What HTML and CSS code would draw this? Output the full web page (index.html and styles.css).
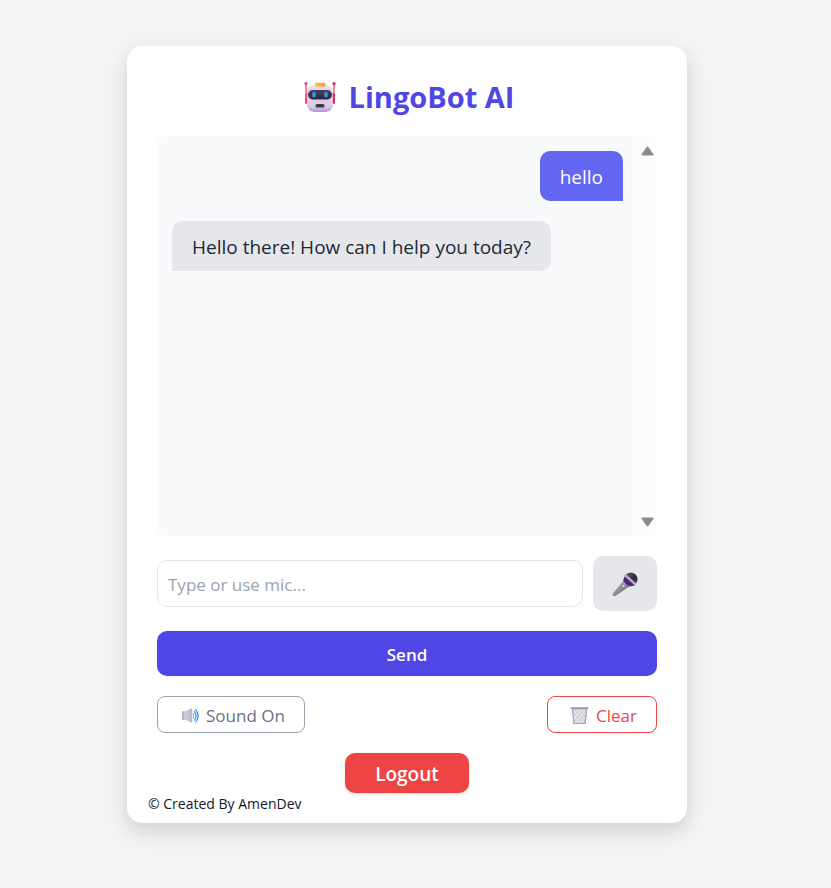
FILE: index.html
```
<!DOCTYPE html>
<html lang="en">
<head>
<meta charset="utf-8">
<meta name="viewport" content="width=device-width, initial-scale=1">
<title>LingoBot AI</title>
<link rel="stylesheet" href="styles.css">
</head>
<body>
<main class="card">
  <h1 class="title">
    <svg class="robot" viewBox="0 0 32 32" aria-hidden="true">
      <defs>
        <linearGradient id="face" x1="0" y1="0" x2="0" y2="1"><stop offset="0" stop-color="#e6dce6"/><stop offset=".8" stop-color="#d9cae1"/><stop offset="1" stop-color="#b592d6"/></linearGradient>
        <linearGradient id="visor" x1="0" y1="0" x2="0" y2="1"><stop offset="0" stop-color="#50405f"/><stop offset="1" stop-color="#2b2640"/></linearGradient>
        <linearGradient id="cap" x1="0" y1="0" x2="1" y2="0"><stop offset="0" stop-color="#ffc233"/><stop offset="1" stop-color="#e99a45"/></linearGradient>
      </defs>
      <path d="M2 2.500v16M30 2.500v16" stroke="#f0416f" stroke-width="1.300"/>
      <circle cx="2" cy="2.500" r="1.600" fill="#ef3e6b"/><circle cx="30" cy="2.500" r="1.600" fill="#d82858"/>
      <rect x="1" y="12" width="4" height="11" rx="1.500" fill="#ff4779"/><rect x="27" y="12" width="4" height="11" rx="1.500" fill="#dd2860"/>
      <path d="M9 4.500h14q5.500.5 5.800 6l.2 13q-.5 7-7 7.500H10q-6.500-.5-7-7.500l.2-13Q3.500 5 9 4.500Z" fill="url(#face)"/>
      <rect x="11" y="1.800" width="10.500" height="3.600" rx="1.400" fill="url(#cap)"/>
      <rect x="4" y="9" width="24" height="9.500" rx="4.700" fill="url(#visor)"/>
      <rect x="8.300" y="11" width="3.400" height="5.500" rx="1.600" fill="#269df0"/><rect x="20.300" y="11" width="3.400" height="5.500" rx="1.600" fill="#269df0"/>
      <rect x="11.500" y="23" width="9" height="3.600" rx="1.600" fill="#40364e"/>
    </svg>
    <span>LingoBot AI</span>
  </h1>

  <section class="chat" aria-label="Conversation">
    <div class="messages">
      <p class="bubble user">hello</p>
      <p class="bubble bot">Hello there! How can I help you today?</p>
    </div>
    <div class="track" aria-hidden="true">
      <svg class="arrow" viewBox="0 0 13 10"><path d="M6.500 1.500 11.500 8.500H1.500Z" fill="#8b8b8b" stroke="#8b8b8b" stroke-width="2" stroke-linejoin="round"/></svg>
      <svg class="arrow" viewBox="0 0 13 10"><path d="M1.500 1.500h10L6.500 8.500Z" fill="#8b8b8b" stroke="#8b8b8b" stroke-width="2" stroke-linejoin="round"/></svg>
    </div>
  </section>

  <form class="composer">
    <div class="entry">
      <input class="field" type="text" placeholder="Type or use mic..." aria-label="Message">
      <button class="mic" type="button" aria-label="Use microphone">
        <svg viewBox="0 0 26 26" aria-hidden="true">
          <defs>
            <linearGradient id="grip" x1="0" y1="0" x2="1" y2="1"><stop offset=".2" stop-color="#b9b0b9"/><stop offset=".8" stop-color="#706475"/></linearGradient>
            <linearGradient id="head" x1="0" y1="0" x2="1" y2="1"><stop offset="0" stop-color="#665a70"/><stop offset=".6" stop-color="#33263f"/><stop offset="1" stop-color="#6a45a0"/></linearGradient>
          </defs>
          <path d="M12 8 .8 21.500q-.6 1.200.3 2.200 1 .9 2.300.3L18 14Z" fill="url(#grip)"/>
          <circle cx="18.800" cy="7.300" r="6.700" fill="url(#head)"/>
          <path d="m12.200 5-1 4 7 5.500 4.500-1.300Z" fill="#4a2480"/>
          <path d="m13.500 3.500 9.500 8.500" stroke="#b9b0bd" stroke-width="2.400" stroke-linecap="round"/>
          <circle cx="11.500" cy="14" r="1.100" fill="#e4dfe6"/>
        </svg>
      </button>
    </div>
    <button class="send" type="submit">Send</button>
  </form>

  <div class="tools">
    <button class="tool sound" type="button">
      <svg viewBox="0 0 19 18" aria-hidden="true">
        <defs><linearGradient id="cone" x1="0" y1="0" x2="1" y2="0"><stop offset="0" stop-color="#a69eac"/><stop offset=".3" stop-color="#d5ced9"/><stop offset="1" stop-color="#bdb5c4"/></linearGradient></defs>
        <path d="M2 5q0-1 1-1h3l5-2.600q1.200-.3 1.200.8v12.600q0 1.200-1.200.8L6 13H3q-1 0-1-1Z" fill="url(#cone)"/>
        <path d="M13 6.500q1.800 2.200 0 4.600" fill="none" stroke="#8fb9e8" stroke-width="1.200" stroke-linecap="round"/>
        <path d="M14.300 4.500q3.800 4.200 0 8.600M15.800 2.600q4.600 6.200 0 12.400" fill="none" stroke="#4896e8" stroke-width="1.300" stroke-linecap="round"/>
      </svg>
      <span>Sound On</span>
    </button>
    <button class="tool clear" type="button">
      <svg viewBox="0 0 19 18" aria-hidden="true">
        <path d="M2 2h15l-1.600 14.500H3.600Z" fill="#d1cad8"/>
        <path d="m4 4 10 12M8 3l7 9M12 3l4 5M3.500 8l6 8M15 4 5 16M11 3 4 12M7 3 3.500 8M15.500 10 10 16" stroke="#f1eef5" stroke-width="1"/>
        <path d="M2.400 2 3.800 16.500h11.400L16.600 2" fill="none" stroke="#aaa2b7" stroke-width="1.200"/>
        <path d="M1.500 1.200h16" stroke="#9c93aa" stroke-width="1.800" stroke-linecap="round"/>
      </svg>
      <span>Clear</span>
    </button>
  </div>

  <button class="logout" type="button">Logout</button>
  <footer class="credit">© Created By AmenDev</footer>
</main>
</body>
</html>
```
FILE: styles.css
```
* {
  box-sizing: border-box;
}

body {
  margin: 0;
  min-height: 100vh;
  padding: 46px 27px 46px 10px;
  background: #f3f4f6;
  color: #111827;
  font-family: "Segoe UI", "Open Sans", "Noto Sans", sans-serif;
}

button,
input {
  font: inherit;
}

button {
  padding: 2px 0 0;
  cursor: pointer;
}

.card {
  display: flex;
  flex-direction: column;
  width: 100%;
  max-width: 560px;
  margin: 0 auto;
  padding: 30px 30px 8px;
  border-radius: 15px;
  background: #fff;
  box-shadow: 0 8px 20px rgba(0, 0, 0, 0.15);
}

.title {
  display: flex;
  align-items: center;
  justify-content: center;
  gap: 13px;
  margin: 0 0 18px;
  padding-left: 4px;
  color: #4f46e5;
  font-size: 29px;
  font-weight: 700;
  line-height: 42px;
}

.robot {
  width: 32px;
  height: 32px;
}

.chat {
  display: flex;
  height: 400px;
  overflow: hidden;
  border-radius: 10px;
  background: #f9fafc;
}

.messages {
  display: flex;
  flex: 1;
  flex-direction: column;
  gap: 20px;
  padding: 15px;
}

.bubble {
  max-width: 85%;
  margin: 0;
  padding: 13px 20px 11px;
  border-radius: 10px;
  font-size: 19px;
  line-height: 26px;
}

.user {
  align-self: flex-end;
  border-bottom-right-radius: 0;
  background: #6366f1;
  color: #fff;
}

.bot {
  align-self: flex-start;
  border-bottom-left-radius: 0;
  background: #e5e7eb;
  color: #1f2937;
}

.track {
  display: flex;
  flex-direction: column;
  align-items: center;
  justify-content: space-between;
  width: 19px;
  padding: 10px 0 9px;
  background: #fcfcfc;
}

.arrow {
  width: 13px;
  height: 10px;
}

.composer {
  display: flex;
  flex-direction: column;
  gap: 20px;
  margin-top: 20px;
}

.entry {
  display: flex;
  align-items: center;
  gap: 10px;
}

.field {
  flex: 1;
  min-width: 0;
  height: 47px;
  padding: 2px 10px 0;
  border: 1px solid #e5e7eb;
  border-radius: 10px;
  background: #fff;
  color: #111827;
  font-size: 17px;
}

.field::placeholder {
  color: #9ca3af;
}

.mic {
  display: flex;
  align-items: center;
  justify-content: center;
  width: 64px;
  height: 55px;
  border: 0;
  border-radius: 10px;
  background: #e5e7eb;
}

.mic svg {
  width: 26px;
  height: 26px;
}

.send {
  height: 45px;
  border: 0;
  border-radius: 10px;
  background: #4f46e5;
  color: #fff;
  font-size: 17px;
  font-weight: 600;
}

.tools {
  display: flex;
  justify-content: space-between;
  margin-top: 20px;
}

.tool {
  display: flex;
  align-items: center;
  gap: 7px;
  height: 37px;
  padding: 2px 19px 0 22px;
  border: 1px solid;
  border-radius: 8px;
  background: #fff;
  font-size: 17px;
}

.tool svg {
  width: 19px;
  height: 18px;
}

.sound {
  border-color: #9ca3af;
  color: #6b7280;
}

.clear {
  border-color: #ef4444;
  color: #ef4444;
}

.logout {
  align-self: center;
  height: 40px;
  margin-top: 20px;
  padding: 2px 30px 0;
  border: 0;
  border-radius: 10px;
  background: #ef4444;
  box-shadow: 0 1px 3px rgba(0, 0, 0, 0.15);
  color: #fff;
  font-size: 19px;
  font-weight: 600;
}

.credit {
  margin-left: -9px;
  font-size: 14px;
  line-height: 22px;
}
```
